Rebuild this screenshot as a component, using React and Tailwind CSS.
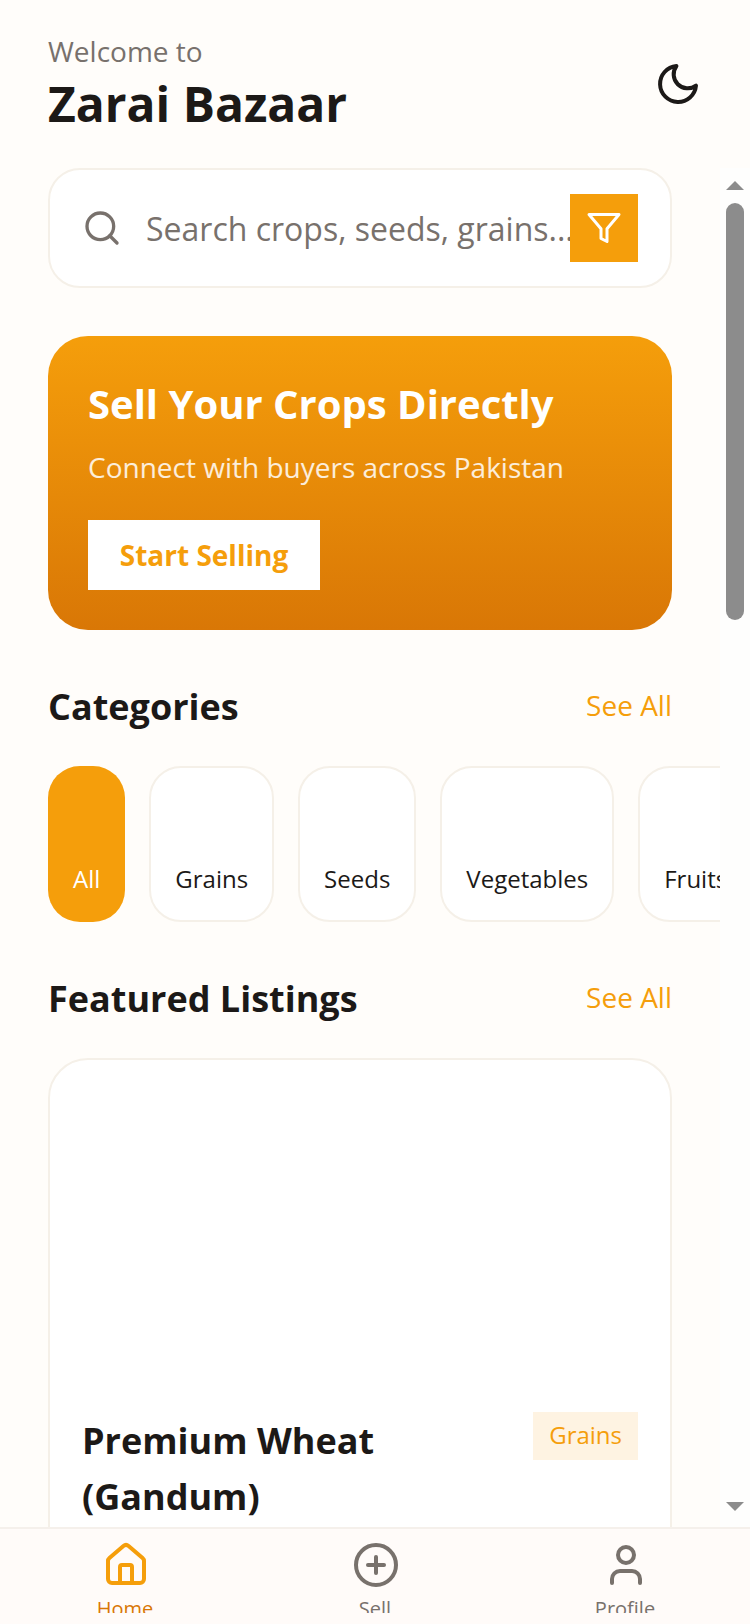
import { House, CirclePlus, User } from "lucide-react";
import { FiFilter, FiMoon, FiSearch } from "react-icons/fi";

const categories = ["All", "Grains", "Seeds", "Vegetables", "Fruits"];

function SectionHeader({ title }) {
  return (
    <div className="flex items-start justify-between h-[48px]">
      <h2 className="pt-[1px] text-[36px] leading-[48px] font-bold text-[#1c1917]">{title}</h2>
      <span className="text-[28px] leading-[40px] pt-[3px] text-[#f59e0b]">See All</span>
    </div>
  );
}

function NavItem({ icon: Icon, label, active, size = 48 }) {
  return (
    <div className="flex flex-col items-center">
      <div className="h-[52px] mb-[2px] pl-[2px] flex items-center justify-center">
        <Icon size={size} strokeWidth={2} className={active ? "text-[#f59e0b]" : "text-[#78716c]"} />
      </div>
      <span className={`text-[20px] leading-[32px] ${active ? "text-[#d97706]" : "text-[#78716c]"}`}>{label}</span>
    </div>
  );
}

export default function App() {
  return (
    <div className="h-[1624px] w-[750px] overflow-hidden flex flex-col bg-[#fffdfa] font-['Open_Sans',sans-serif]">
      {/* Header */}
      <div className="h-[168px] shrink-0 pl-12 pr-[48px] pt-[31px] flex items-start justify-between">
        <div>
          <p className="text-[28px] leading-[40px] text-[#78716c]">Welcome to</p>
          <h1 className="mt-[1px] text-[48px] leading-[64px] font-bold text-[#1c1917]">Zarai Bazaar</h1>
        </div>
        <div className="mt-[29px] text-[#1c1917]">
          <FiMoon size={48} strokeWidth={2} />
        </div>
      </div>

      <div className="flex-1 min-h-0 flex">
        {/* Scroll area */}
        <div className="w-[720px] overflow-hidden pl-12">
          <div className="w-[624px]">
            {/* Search */}
            <div className="h-[120px] rounded-[32px] border-2 border-[#f5f0e8] bg-white flex items-center pl-[32px] pr-[32px]">
              <FiSearch size={40} strokeWidth={2} className="text-[#78716c] shrink-0" />
              <div className="ml-[24px] pt-[2px] flex-1 min-w-0 whitespace-nowrap text-[32px] leading-[44px] text-[#78716c]">
                Search crops, seeds, grains...
              </div>
              <div className="relative w-[68px] h-[68px] shrink-0 bg-[#f59e0b] flex items-center justify-center">
                <FiFilter size={36} strokeWidth={2} className="text-white" />
              </div>
            </div>

            {/* Banner */}
            <div className="mt-[48px] h-[294px] rounded-[40px] bg-gradient-to-b from-[#f59e0b] to-[#d97706] px-10 pt-[40px]">
              <h2 className="text-[40px] leading-[56px] font-bold text-white">Sell Your Crops Directly</h2>
              <p className="mt-[15px] text-[28px] leading-[40px] text-white/85">Connect with buyers across Pakistan</p>
              <div className="mt-[33px] w-[232px] h-[70px] bg-white flex items-center justify-center">
                <span className="text-[28px] leading-[40px] font-bold text-[#f59e0b]">Start Selling</span>
              </div>
            </div>

            {/* Categories */}
            <div className="mt-[52px]">
              <SectionHeader title="Categories" />
            </div>
            <div className="mt-[36px] flex gap-6 w-[672px] overflow-hidden">
              {categories.map((name, i) => (
                <div
                  key={name}
                  className={`h-[156px] shrink-0 rounded-[32px] flex items-end text-[24px] leading-[32px] ${
                    i === 0
                      ? "bg-[#f59e0b] text-white px-[25px] pb-[27px]"
                      : "bg-white border-2 border-[#f5f0e8] text-[#1c1917] px-6 pb-[25px]"
                  }`}
                >
                  {name}
                </div>
              ))}
            </div>

            {/* Featured */}
            <div className="mt-[52px]">
              <SectionHeader title="Featured Listings" />
            </div>
            <div className="mt-[36px] h-[520px] rounded-[40px] border-2 border-[#f5f0e8] bg-white px-[32px] pt-[352px] flex items-start justify-between">
              <h3 className="mt-[1px] w-[360px] text-[36px] leading-[56px] font-bold text-[#1c1917]">Premium Wheat (Gandum)</h3>
              <div className="h-[48px] px-4 pb-[2px] bg-[#fef3e2] flex items-center text-[24px] text-[#f59e0b]">Grains</div>
            </div>
          </div>
        </div>

        {/* Scrollbar */}
        <div className="w-[30px] bg-[#fefefd] flex flex-col items-center pt-[13px]">
          <svg width="18" height="9" viewBox="0 0 18 9"><polygon points="9,0 18,9 0,9" fill="#8c8c8c" /></svg>
          <div className="mt-[13px] w-[18px] h-[417px] rounded-full bg-[#8c8c8c]" />
          <div className="flex-1" />
          <svg className="mb-[16px]" width="18" height="9" viewBox="0 0 18 9"><polygon points="0,0 18,0 9,9" fill="#8c8c8c" /></svg>
        </div>
      </div>

      {/* Bottom nav */}
      <div className="h-[97px] shrink-0 border-t-2 border-[#f5f0eb] bg-[#fffbf9] pt-[10px]">
        <div className="h-[74px] overflow-hidden grid grid-cols-3">
          <NavItem icon={House} label="Home" active />
          <NavItem icon={CirclePlus} label="Sell" />
          <NavItem icon={User} label="Profile" />
        </div>
      </div>
    </div>
  );
}
